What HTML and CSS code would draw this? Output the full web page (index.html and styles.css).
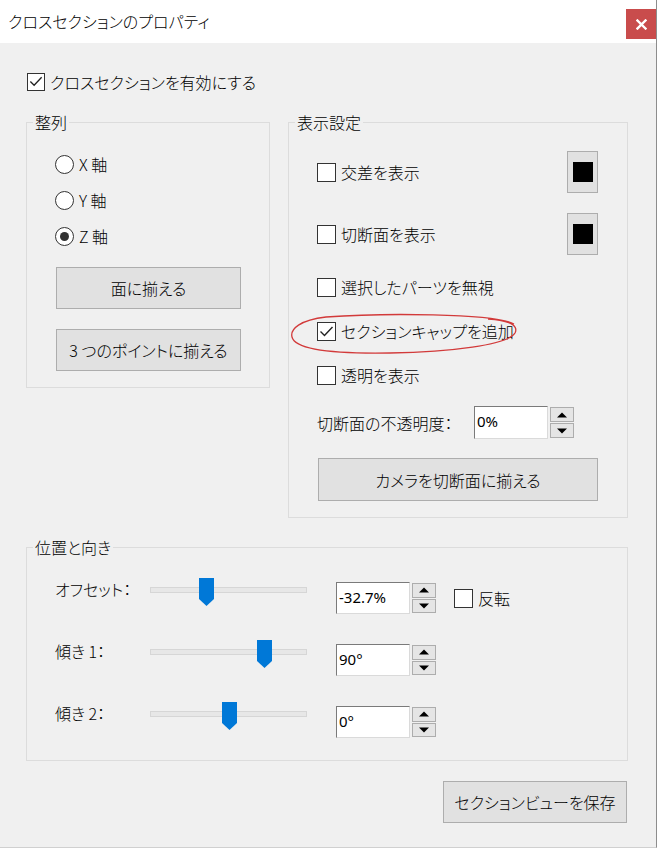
FILE: index.html
```html
<!DOCTYPE html>
<html lang="ja">
<head>
<meta charset="utf-8">
<title>クロスセクションのプロパティ</title>
<link rel="stylesheet" href="styles.css">
</head>
<body>
<div class="window">
  <div class="titlebar">
    <span class="title">クロスセクションのプロパティ</span>
    <span class="close"><svg width="11" height="11" viewBox="0 0 11 11"><path d="M1.5 1.5 L9.5 9.5 M9.5 1.5 L1.5 9.5" stroke="#fff" stroke-width="2.4" stroke-linecap="square"/></svg></span>
  </div>
  <div class="content">
    <div class="check main-check">
      <span class="box"><svg width="17" height="17" viewBox="0 0 17 17"><path d="M2.5 8.5 L6.5 12.5 L14.5 4" fill="none" stroke="#222" stroke-width="1.4"/></svg></span>
      <span class="lbl">クロスセクションを有効にする</span>
    </div>

    <div class="columns">
      <fieldset class="group align">
        <legend>整列</legend>
        <div class="radio-row first"><span class="radio"></span><span class="lbl">X 軸</span></div>
        <div class="radio-row"><span class="radio"></span><span class="lbl">Y 軸</span></div>
        <div class="radio-row"><span class="radio on"><span class="dot"></span></span><span class="lbl">Z 軸</span></div>
        <button class="btn align-btn first-btn">面に揃える</button>
        <button class="btn align-btn second-btn">3 つのポイントに揃える</button>
      </fieldset>

      <fieldset class="group display">
        <legend>表示設定</legend>
        <div class="drow r1">
          <div class="check"><span class="box"></span><span class="lbl">交差を表示</span></div>
          <span class="color-btn"><span class="swatch"></span></span>
        </div>
        <div class="drow r2">
          <div class="check"><span class="box"></span><span class="lbl">切断面を表示</span></div>
          <span class="color-btn"><span class="swatch"></span></span>
        </div>
        <div class="drow r3">
          <div class="check"><span class="box"></span><span class="lbl">選択したパーツを無視</span></div>
        </div>
        <div class="drow r4">
          <div class="check"><span class="box"><svg width="17" height="17" viewBox="0 0 17 17"><path d="M2.5 8.5 L6.5 12.5 L14.5 4" fill="none" stroke="#222" stroke-width="1.4"/></svg></span><span class="lbl">セクションキャップを追加</span></div>
          <svg class="annot" width="232" height="46" viewBox="0 0 232 46"><path d="M224 13 C205 2 90 2 36 6 C10 9 0 18 2 26 C5 38 40 43 100 42 C160 41 218 34 225 22 C229 14 218 9 198 8" fill="none" stroke="#d23a3a" stroke-width="1.3"/></svg>
        </div>
        <div class="drow r5">
          <div class="check"><span class="box"></span><span class="lbl">透明を表示</span></div>
        </div>
        <div class="drow r6">
          <span class="lbl op-lbl">切断面の不透明度：</span>
          <span class="num"><span class="field">0%</span><span class="spin"><span class="up"></span><span class="down"></span></span></span>
        </div>
        <button class="btn camera">カメラを切断面に揃える</button>
      </fieldset>
    </div>

    <fieldset class="group position">
      <legend>位置と向き</legend>
      <div class="prow first">
        <span class="lbl plbl">オフセット：</span>
        <div class="slider"><div class="track"></div><svg class="thumb" style="left:49px" width="15" height="28" viewBox="0 0 15 28"><path d="M0 0 H15 V21 L7.5 28 L0 21 Z" fill="#0078d7"/></svg></div>
        <span class="num pnum"><span class="field">-32.7%</span><span class="spin"><span class="up"></span><span class="down"></span></span></span>
        <div class="check flip"><span class="box"></span><span class="lbl">反転</span></div>
      </div>
      <div class="prow">
        <span class="lbl plbl">傾き 1：</span>
        <div class="slider"><div class="track"></div><svg class="thumb" style="left:107px" width="15" height="28" viewBox="0 0 15 28"><path d="M0 0 H15 V21 L7.5 28 L0 21 Z" fill="#0078d7"/></svg></div>
        <span class="num pnum"><span class="field">90°</span><span class="spin"><span class="up"></span><span class="down"></span></span></span>
      </div>
      <div class="prow">
        <span class="lbl plbl">傾き 2：</span>
        <div class="slider"><div class="track"></div><svg class="thumb" style="left:72px" width="15" height="28" viewBox="0 0 15 28"><path d="M0 0 H15 V21 L7.5 28 L0 21 Z" fill="#0078d7"/></svg></div>
        <span class="num pnum"><span class="field">0°</span><span class="spin"><span class="up"></span><span class="down"></span></span></span>
      </div>
    </fieldset>

    <div class="footer">
      <button class="btn save">セクションビューを保存</button>
    </div>
  </div>
</div>
</body>
</html>
```

FILE: styles.css
```css
* { box-sizing: border-box; }
html, body { margin: 0; padding: 0; }
body {
  width: 659px;
  height: 852px;
  overflow: hidden;
  background: #ffffff;
  font-family: "Noto Sans CJK JP", "Noto Sans", sans-serif;
  font-feature-settings: "palt";
  font-weight: 300;
  font-size: 16px;
  color: #000;
}
.window {
  width: 657px;
  height: 848px;
  background: #f0f0f0;
  border-right: 1px solid #8d8d8d;
  border-bottom: 1px solid #d0d0d0;
}
.titlebar {
  height: 43px;
  background: #ffffff;
  display: flex;
  justify-content: space-between;
  align-items: flex-start;
}
.title {
  padding: 10px 0 0 8px;
  line-height: 22px;
  font-size: 16px;
}
.close {
  width: 30px;
  height: 30px;
  margin-top: 9px;
  background: #c94c4c;
  display: flex;
  align-items: center;
  justify-content: center;
}
.content {
  padding-left: 26px;
}
.lbl { line-height: 20px; white-space: nowrap; }
.check {
  display: flex;
  align-items: center;
  gap: 5px;
}
.box {
  width: 19px;
  height: 19px;
  border: 1px solid #333;
  background: #fff;
  display: flex;
  align-items: center;
  justify-content: center;
  flex: none;
}
.main-check {
  margin-top: 29px;
  margin-left: 1px;
  height: 19px;
}
.main-check .box { width: 18px; height: 18px; }

.columns {
  display: flex;
  gap: 18px;
  align-items: flex-start;
  margin-top: 21px;
}
.group {
  margin: 0;
  padding: 0;
  border: 1px solid #dcdcdc;
  min-width: 0;
}
.group legend {
  font-size: 16px;
  line-height: 20px;
  padding: 0 2px;
  margin-left: -22px;
}
.align {
  width: 244px;
  padding: 22px 0 16px 28px;
  display: flex;
  flex-direction: column;
  align-items: flex-start;
}
.radio-row {
  display: flex;
  align-items: center;
  gap: 5px;
  height: 20px;
  margin-top: 16px;
}
.radio-row.first { margin-top: 0; }
.radio {
  width: 19px;
  height: 19px;
  border: 1px solid #333;
  border-radius: 50%;
  background: #fff;
  display: flex;
  align-items: center;
  justify-content: center;
}
.dot {
  width: 9px;
  height: 9px;
  border-radius: 50%;
  background: #333;
}
.btn {
  font-family: inherit;
  font-feature-settings: "palt";
  font-weight: 300;
  font-size: 16px;
  color: #000;
  background: #e1e1e1;
  border: 1px solid #adadad;
  padding: 0;
  margin: 0;
  line-height: 20px;
}
.align-btn {
  width: 185px;
  height: 42px;
  margin-left: 1px;
}
.first-btn { margin-top: 21px; }
.second-btn { margin-top: 20px; }

.display {
  width: 340px;
  padding: 19px 29px 16px 28px;
}
.drow {
  display: flex;
  align-items: center;
  justify-content: space-between;
  position: relative;
}
.r1 { height: 42px; }
.r2 { height: 42px; margin-top: 20px; }
.r3 { height: 20px; margin-top: 22px; }
.r4 { height: 20px; margin-top: 24px; }
.r5 { height: 20px; margin-top: 24px; }
.r6 { height: 33px; margin-top: 21px; justify-content: flex-start; }
.annot {
  position: absolute;
  left: -27px;
  top: -10px;
}
.color-btn {
  width: 31px;
  height: 42px;
  background: #e1e1e1;
  border: 1px solid #adadad;
  display: flex;
  align-items: center;
  justify-content: center;
}
.swatch {
  width: 20px;
  height: 20px;
  background: #000;
}
.op-lbl { width: 157px; }
.num {
  display: flex;
  align-items: stretch;
  gap: 2px;
}
.field {
  width: 74px;
  height: 33px;
  background: #fff;
  border: 1px solid;
  border-color: #7a7a7a #dadada #dadada #7a7a7a;
  font-family: "Noto Sans", sans-serif;
  font-weight: 400;
  font-size: 15px;
  line-height: 28px;
  padding-left: 2px;
}
.spin {
  width: 24px;
  display: flex;
  flex-direction: column;
  gap: 1px;
  padding: 1px 0;
}
.spin span {
  flex: 1;
  background: #e5e5e5;
  border: 1px solid #adadad;
  position: relative;
}
.spin .up::after, .spin .down::after {
  content: "";
  position: absolute;
  left: 50%;
  top: 50%;
  width: 0;
  height: 0;
  border-left: 5px solid transparent;
  border-right: 5px solid transparent;
  transform: translate(-50%, -50%);
}
.spin .up::after { border-bottom: 5px solid #000; }
.spin .down::after { border-top: 5px solid #000; }
.camera {
  width: 280px;
  height: 43px;
  margin-top: 19px;
  margin-left: 1px;
  display: block;
}

.position {
  width: 602px;
  margin-top: 19px;
  padding: 21px 0 23px 28px;
}
.prow {
  display: flex;
  align-items: flex-start;
  height: 35px;
  margin-top: 27px;
}
.prow.first { margin-top: 0; }
.plbl {
  width: 95px;
  line-height: 22px;
}
.slider {
  width: 157px;
  height: 28px;
  position: relative;
}
.track {
  margin-top: 9px;
  height: 6px;
  background: #e7e7e7;
  border: 1px solid #d6d6d6;
}
.thumb {
  position: absolute;
  top: 0;
}
.pnum {
  margin-left: 29px;
  margin-top: 4px;
}
.pnum .field { height: 32px; }
.flip {
  margin-left: 18px;
  margin-top: 10px;
}

.footer {
  width: 601px;
  display: flex;
  justify-content: flex-end;
  margin-top: 20px;
}
.save {
  width: 184px;
  height: 42px;
}
```
